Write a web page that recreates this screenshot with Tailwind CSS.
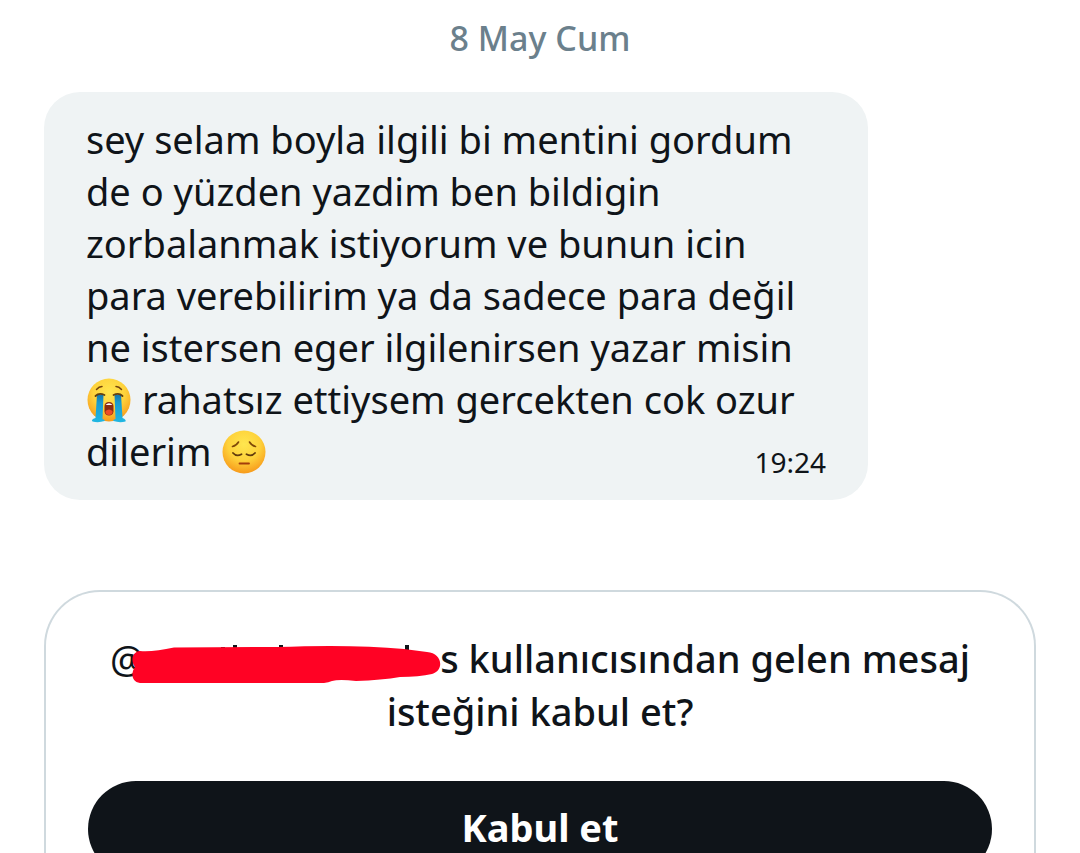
<!DOCTYPE html>
<html lang="tr">

<head>
    <meta charset="UTF-8">
    <meta name="viewport" content="width=device-width, initial-scale=1.0">
    <title>Mesaj isteği</title>
    <script src="https://cdn.jsdelivr.net/npm/@tailwindcss/browser@4"></script>
</head>

<body class="h-screen overflow-hidden bg-white text-[#0f1419] font-['Noto_Sans',sans-serif]">
    <main class="px-11 pt-3">
        <h2 class="text-center text-[34px] leading-[52px] font-medium text-[#6b808c]">8 May Cum</h2>

        <!-- Message -->
        <article class="relative mt-7 max-w-[824px] rounded-[36px] bg-[#eff3f4] px-[42px] pt-[21px] pb-[23px]">
            <p class="text-[38px] leading-[52px] whitespace-nowrap">sey selam boyla ilgili bi mentini gordum<br>
                de o yüzden yazdim ben bildigin<br>
                zorbalanmak istiyorum ve bunun icin<br>
                para verebilirim ya da sadece para değil<br>
                ne istersen eger ilgilenirsen yazar misin<br>
                <svg class="inline-block size-[46px] align-middle -mt-2" viewBox="0 0 46 46" role="img" aria-label="hüngür hüngür ağlayan yüz">
                    <defs>
                        <radialGradient id="face" cx="50%" cy="32%" r="68%">
                            <stop offset="0" stop-color="#ffe64f" />
                            <stop offset="0.55" stop-color="#fed23b" />
                            <stop offset="1" stop-color="#f79a1b" />
                        </radialGradient>
                        <linearGradient id="tear" x1="0" y1="0" x2="0" y2="1">
                            <stop offset="0" stop-color="#1676a8" />
                            <stop offset="0.3" stop-color="#199bd0" />
                            <stop offset="1" stop-color="#20b7e2" />
                        </linearGradient>
                    </defs>
                    <circle cx="23" cy="23" r="21.5" fill="url(#face)" />
                    <path d="M10.500 12.500q2.500-3 5.500-3M35.500 12.500q-2.500-3-5.500-3" fill="none" stroke="#72420d" stroke-width="1.500" stroke-linecap="round" />
                    <path d="M18.500 29.500q0-4.500 4.500-4.500t4.500 4.500v5q-.500 4-4.500 4t-4.500-4z" fill="#8a2c12" />
                    <path d="M19.500 34q3.500-3 7 0v1.500q-.500 2.500-3.500 2.500t-3.500-2.500z" fill="#ee4b24" />
                    <path d="M19.500 28q3.500-3.500 7 0z" fill="#fff" />
                    <path d="M11 17.500h6.500l-1 24.500q3 1 2 2-6 2-12 .500-2-2 3-3.500z" fill="url(#tear)" />
                    <path d="M28.500 17.500h6.500l1.500 23.500q4 1.500 3 3.500-6 1.500-12-.500-1-1 2-2z" fill="url(#tear)" />
                    <path d="M9.500 19q3.500-3.500 9-1M36.500 19q-3.500-3.500-9-1" fill="none" stroke="#624011" stroke-width="1.800" stroke-linecap="round" />
                </svg>
                rahatsız ettiysem gercekten cok ozur<br>
                dilerim
                <svg class="inline-block size-[46px] align-middle -mt-2" viewBox="0 0 46 46" role="img" aria-label="düşünceli yüz">
                    <circle cx="23" cy="23" r="21.500" fill="url(#face)" />
                    <path d="M11.500 17.500q4-1 6-4.500M34.500 17.500q-4-1-6-4.500" fill="none" stroke="#804908" stroke-width="1.600" stroke-linecap="round" />
                    <path d="M12 24q3.500 4 8.500 1.200M34 24q-3.500 4-8.500 1.200" fill="none" stroke="#633c0d" stroke-width="1.800" stroke-linecap="round" />
                    <path d="M18.500 34.500h9.500" fill="none" stroke="#a33d0b" stroke-width="1.800" stroke-linecap="round" />
                </svg>
            </p>
            <time class="absolute right-[42px] bottom-[18px] text-[28px] leading-10" datetime="19:24">19:24</time>
        </article>

        <!-- Message request -->
        <section class="mt-[90px] rounded-t-[56px] border-2 border-b-0 border-[#cfd9de] px-[42px] pt-10 pb-16">
            <h1 class="text-center text-[38px] leading-[53px] font-medium whitespace-nowrap"><span class="font-normal">@</span><span class="relative inline-block w-[296px]">
                    <svg class="absolute -left-3 -top-[34px] h-11 w-[310px]" viewBox="0 0 310 44" aria-hidden="true">
                        <path d="M101 6h4v5h-4zM147 6h4v6h-4zM273 6h4v7h-4zM214 37h6v4h-6zM89 8h4v4h-4z" fill="#0f1419" />
                        <path d="M8 12Q22 13 42 8.500L145 8q75-3 127 2l23 3c15 1 18 18 5 22q-13 3-32 3-18 3-44 4-17-2-24 0-7 3-18 2H8c-9-1-9-11-5-16-4-5-4-15 5-16z" fill="#ff0224" />
                    </svg>
                </span>s kullanıcısından gelen mesaj<br>isteğini kabul et?</h1>
            <button type="button" class="mt-[43px] h-24 w-full rounded-full bg-[#0f1419] pb-1 text-[38px] font-bold text-white">Kabul et</button>
        </section>
    </main>
</body>

</html>
